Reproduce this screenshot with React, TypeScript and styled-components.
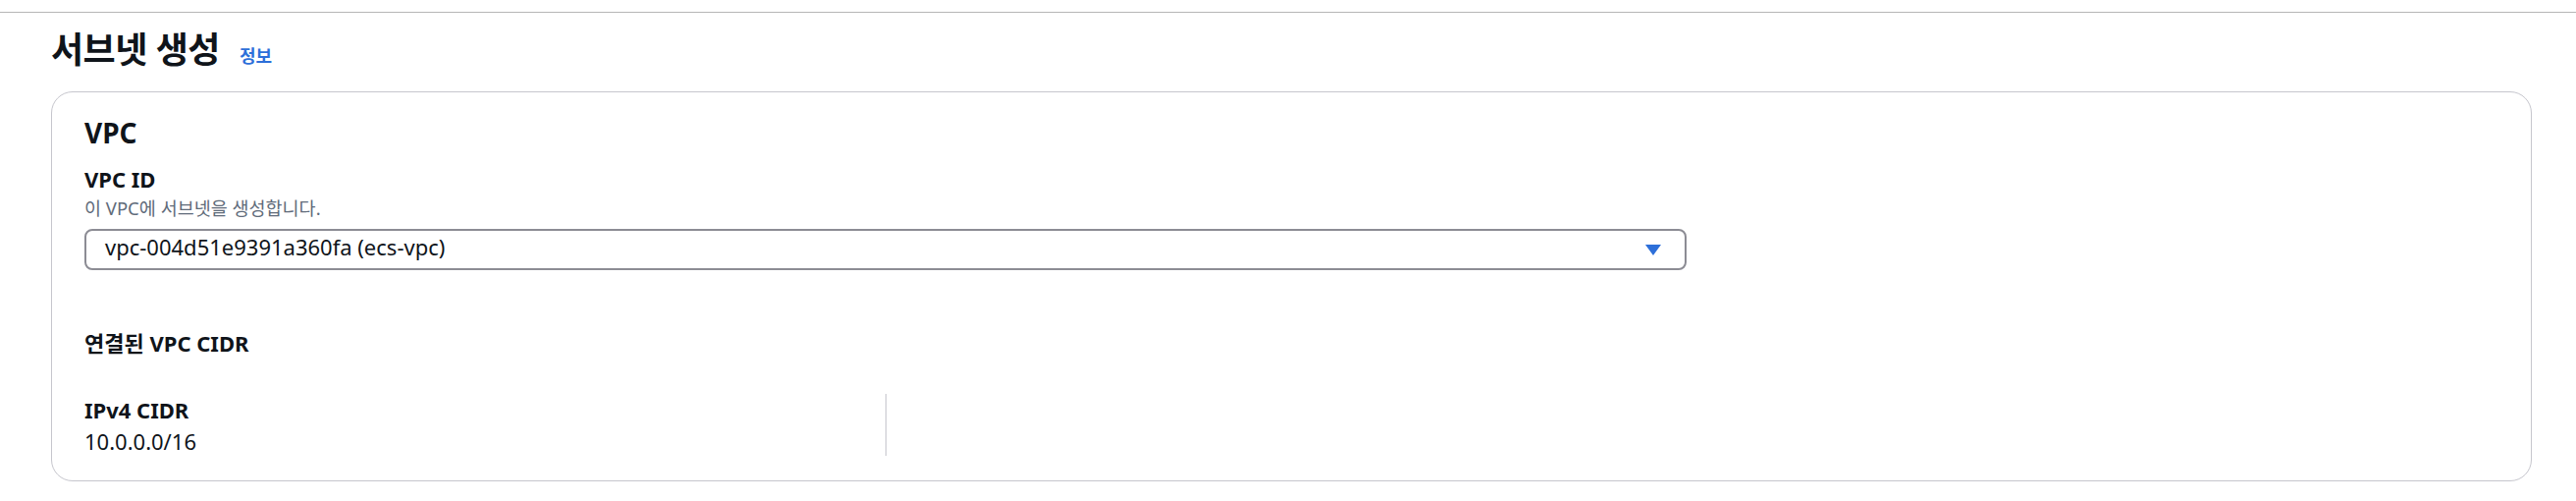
import React from 'react';
import styled, { createGlobalStyle } from 'styled-components';

const GlobalStyle = createGlobalStyle`
  html, body {
    margin: 0;
    padding: 0;
    background: #ffffff;
  }
  body {
    font-family: "Noto Sans", "Noto Sans CJK KR", sans-serif;
    color: #16191f;
  }
`;

const Page = styled.div`
  width: 100%;
  min-height: 510px;
  background: #fff;
`;

const TopBar = styled.div`
  height: 12px;
  border-bottom: 1px solid #b6b6b6;
`;

const Content = styled.div`
  padding: 0 45px 0 52px;
`;

const HeaderRow = styled.div`
  display: flex;
  align-items: baseline;
  gap: 20px;
  margin-top: 16px;
`;

const Title = styled.h1`
  margin: 0;
  font-size: 36px;
  line-height: 44px;
  font-weight: 700;
  letter-spacing: -0.5px;
  color: #0f141a;
`;

const InfoLink = styled.a`
  font-size: 18px;
  font-weight: 700;
  color: #2d6fd9;
  text-decoration: none;
`;

const Card = styled.section`
  margin-top: 20px;
  border: 1px solid #c6c6cd;
  border-radius: 22px;
  padding: 23px 33px 25px;
  background: #fff;
`;

const CardTitle = styled.h2`
  margin: 0;
  font-size: 28px;
  line-height: 36px;
  font-weight: 700;
  color: #0f141a;
`;

const Label = styled.div<{ $gap?: number }>`
  margin-top: ${p => p.$gap ?? 0}px;
  font-size: 22px;
  line-height: 28px;
  font-weight: 700;
  color: #0f141a;
`;

const Description = styled.div`
  margin-top: 5px;
  font-size: 18.5px;
  line-height: 22px;
  color: #5f6b7a;
`;

const FieldGrid = styled.div`
  display: grid;
  grid-template-columns: repeat(3, 1fr);
  column-gap: 22px;
  margin-top: 10px;
`;

const SelectBox = styled.button`
  grid-column: span 2;
  display: flex;
  align-items: center;
  justify-content: space-between;
  height: 42px;
  box-sizing: border-box;
  padding: 0 24px 6px 19px;
  border: 2px solid #8c8c94;
  border-radius: 8px;
  background: #fff;
  font-family: inherit;
  font-size: 22px;
  line-height: 30px;
  color: #0f141a;
  text-align: left;
  cursor: pointer;
`;

const Caret = styled.svg`
  width: 16px;
  height: 11px;
  margin-top: 6px;
  flex-shrink: 0;
`;

const SubHeading = styled(Label)`
  margin-top: 60px;
`;

const KeyValueGrid = styled.div`
  display: grid;
  grid-template-columns: 816px 1fr 1fr;
  margin-top: 38px;
`;

const KeyValueCell = styled.div<{ $divider?: boolean }>`
  height: 63px;
  box-sizing: border-box;
  padding-top: 2px;
  border-left: ${p => (p.$divider ? '1px solid #c6c6cd' : 'none')};
`;

const Value = styled.div`
  margin-top: 4px;
  font-size: 22px;
  line-height: 28px;
  color: #0f141a;
`;

export default function App() {
  return (
    <Page>
      <GlobalStyle />
      <TopBar />
      <Content>
        <HeaderRow>
          <Title>서브넷 생성</Title>
          <InfoLink href="#">정보</InfoLink>
        </HeaderRow>

        <Card>
          <CardTitle>VPC</CardTitle>
          <Label $gap={15}>VPC ID</Label>
          <Description>이 VPC에 서브넷을 생성합니다.</Description>
          <FieldGrid>
            <SelectBox type="button">
              <span>vpc-004d51e9391a360fa (ecs-vpc)</span>
              <Caret viewBox="0 0 16 11">
                <polygon points="0,0 16,0 8,11" fill="#2d6fd9" />
              </Caret>
            </SelectBox>
          </FieldGrid>

          <SubHeading>연결된 VPC CIDR</SubHeading>
          <KeyValueGrid>
            <KeyValueCell>
              <Label>IPv4 CIDR</Label>
              <Value>10.0.0.0/16</Value>
            </KeyValueCell>
            <KeyValueCell $divider />
            <KeyValueCell />
          </KeyValueGrid>
        </Card>
      </Content>
    </Page>
  );
}
